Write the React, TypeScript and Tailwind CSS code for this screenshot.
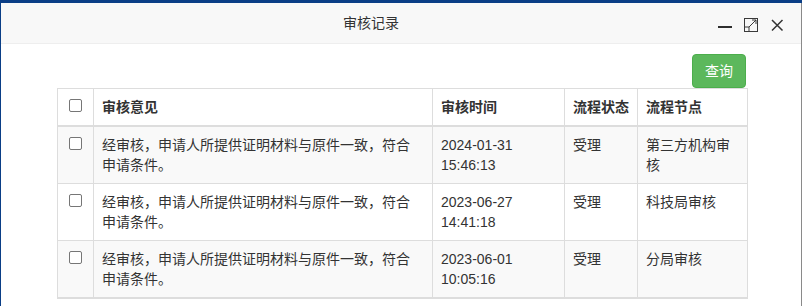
import React from "react";

interface RecordRow {
    opinion: string;
    time: string;
    status: string;
    node: string;
}

const rows: RecordRow[] = [
    { opinion: "经审核，申请人所提供证明材料与原件一致，符合申请条件。", time: "2024-01-31 15:46:13", status: "受理", node: "第三方机构审核" },
    { opinion: "经审核，申请人所提供证明材料与原件一致，符合申请条件。", time: "2023-06-27 14:41:18", status: "受理", node: "科技局审核" },
    { opinion: "经审核，申请人所提供证明材料与原件一致，符合申请条件。", time: "2023-06-01 10:05:16", status: "受理", node: "分局审核" },
];

const Checkbox = () => (
    <span className="mt-[2px] block w-[13px] h-[13px] rounded-[2px] border border-[#767676] bg-white mx-auto" />
);

const App = () => {
    return (
        <div
            className="w-[802px] h-[306px] overflow-hidden bg-[#0a3e86] pt-[3px] pl-[1px] text-[14px] text-[#333]"
            style={{ fontFamily: '"Liberation Sans", "Noto Sans CJK SC", Arial, sans-serif' }}
        >
            <div className="w-[801px] h-[303px] bg-white border-r border-[#8a8a8a] flex flex-col">
                {/* header */}
                <div className="h-[41px] shrink-0 bg-[#f8f8f8] border-b border-[#eeeeee] flex items-center relative">
                    <div className="w-[740px] text-center text-[14px] text-[#333] leading-[20px]">审核记录</div>
                    <div className="absolute top-[14px] left-[716px] flex items-center">
                        <svg width="16" height="16" viewBox="0 0 16 16" className="mr-[10px]">
                            <rect x="1" y="9" width="14" height="2" fill="#2e2e2e" />
                        </svg>
                        <svg width="16" height="16" viewBox="0 0 16 16" className="mr-[11px]">
                            <rect x="1.5" y="1.5" width="13" height="13" fill="none" stroke="#3a3a3a" strokeWidth="1" />
                            <rect x="1.5" y="10" width="4.5" height="4.5" fill="none" stroke="#3a3a3a" strokeWidth="1" />
                            <path d="M6 10 L13 3 M9 3 H13 V7" fill="none" stroke="#3a3a3a" strokeWidth="1" />
                        </svg>
                        <svg width="14" height="14" viewBox="0 0 14 14">
                            <path d="M2 2 L12.5 12.5 M12.5 2 L2 12.5" stroke="#333" strokeWidth="1.5" fill="none" />
                        </svg>
                    </div>
                </div>

                {/* body */}
                <div className="pl-[56px] pr-[55px] pt-[10px]">
                    <div className="flex justify-end">
                        <button className="h-[34px] w-[54px] rounded-[4px] bg-[#5cb85c] border border-[#4cae4c] text-white text-[14px] leading-[20px]">
                            查询
                        </button>
                    </div>
                    <table className="w-[690px] table-fixed border-collapse border border-[#dddddd] border-b-2">
                        <colgroup>
                            <col className="w-[36px]" />
                            <col className="w-[339px]" />
                            <col className="w-[132px]" />
                            <col className="w-[73px]" />
                            <col className="w-[110px]" />
                        </colgroup>
                        <thead>
                            <tr className="bg-white">
                                <th className="border border-[#dddddd] border-b-2 p-[8px] align-top">
                                    <Checkbox />
                                </th>
                                <th className="border border-[#dddddd] border-b-2 p-[8px] text-left font-bold leading-[20px] align-top">审核意见</th>
                                <th className="border border-[#dddddd] border-b-2 p-[8px] text-left font-bold leading-[20px] align-top">审核时间</th>
                                <th className="border border-[#dddddd] border-b-2 p-[8px] text-left font-bold leading-[20px] align-top">流程状态</th>
                                <th className="border border-[#dddddd] border-b-2 p-[8px] text-left font-bold leading-[20px] align-top">流程节点</th>
                            </tr>
                        </thead>
                        <tbody>
                            {rows.map((row, index) => (
                                <tr key={index} className={index % 2 === 0 ? "bg-[#f9f9f9]" : "bg-white"}>
                                    <td className="border border-[#dddddd] p-[8px] align-top">
                                        <Checkbox />
                                    </td>
                                    <td className="border border-[#dddddd] p-[8px] leading-[20px] align-top">
                                        <div className="w-[312px]">{row.opinion}</div>
                                    </td>
                                    <td className="border border-[#dddddd] p-[8px] leading-[20px] align-top">{row.time}</td>
                                    <td className="border border-[#dddddd] p-[8px] leading-[20px] align-top">{row.status}</td>
                                    <td className="border border-[#dddddd] p-[8px] leading-[20px] align-top">{row.node}</td>
                                </tr>
                            ))}
                        </tbody>
                    </table>
                </div>
            </div>
        </div>
    );
};

export default App;
